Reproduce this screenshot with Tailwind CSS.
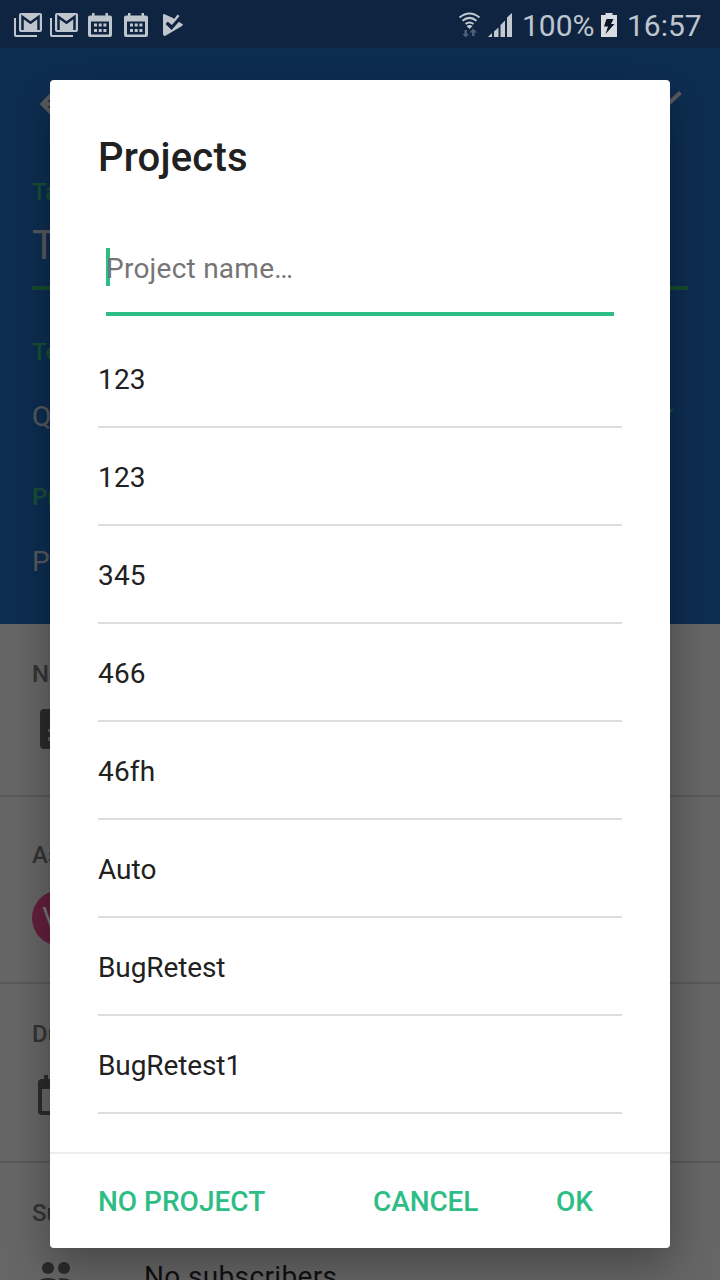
<!DOCTYPE html>
<html lang="en">
<head>
<meta charset="utf-8">
<title>Projects</title>
<script src="https://cdn.jsdelivr.net/npm/@tailwindcss/browser@4"></script>
</head>
<body class="font-[Roboto,sans-serif]">
<div class="relative flex h-[1280px] w-[720px] flex-col overflow-hidden bg-[#666]">
  <!-- status bar -->
  <div class="flex h-12 shrink-0 items-center bg-[#0f2440] text-[30px] leading-[48px] text-[#bfc5cf]">
    <svg class="h-12 w-[200px] shrink-0" viewBox="0 0 200 48" fill="#bfc5cd">
      <g id="mail"><path d="M14 18h2v17h21v2H16q-2 0-2-2z"/><rect x="19" y="13" width="23" height="19" rx="2"/><path d="M22.500 30V17L30.500 22.700 38.500 17V30" fill="none" stroke="#0f2440" stroke-width="2.500"/></g>
      <use href="#mail" x="36"/>
      <g id="cal"><path fill-rule="evenodd" d="M92 13h2.500v2.500h11V13h2.500v2.500h2q2 0 2 2V35q0 2-2 2H90q-2 0-2-2V17.500q0-2 2-2h2zM91 21.500V34.500h18V21.500z"/><path d="M94 23.500h3v3h-3zm4.700 0h3v3h-3zm4.700 0h3v3h-3zM94 29h3v3h-3zm4.700 0h3v3h-3zm4.700 0h3v3h-3z"/></g>
      <use href="#cal" x="36"/>
      <path d="M164 14 173 18 183 24.500 182 26 165 36Q163 36 163 34V15Q163 14 164 14z"/>
      <path d="M167 22.500 171.500 27 181 16.500" fill="none" stroke="#0f2440" stroke-width="4"/>
      <path d="M169.500 19.500 172 22 177.500 14.500 179.500 16 172 25 167.500 21.500z"/>
    </svg>
    <svg class="ml-[252px] h-12 w-[70px] shrink-0" viewBox="452 0 70 48">
      <g fill="none" stroke="#c3c9d1" stroke-width="2"><path d="M459.500 17.500Q469.500 9.500 479.500 17.500"/><path d="M462.500 20.700Q469.500 15 476.500 20.700"/><path d="M465.500 24Q469.500 21 473.500 24"/></g>
      <path fill="#c3c9d1" d="M466.500 26q3-2 6 0l-3 3z"/>
      <path fill="#4e5f76" d="M464.500 30h2.500v4h2l-3.300 3.500L462.500 34h2zM472 37v-4.500h-2.500L473.200 28.500 477 32.500h-2.500V36h-2.500z"/>
      <path fill="#c3c9d1" d="M488 37l4-4v4zm6-5.500 4.500-4V37H494zm6.500-6.500 4.500-4.500V37h-4.500zm6.500-7.500 5-4.500v24h-5z"/>
    </svg>
    <span class="w-[77px] shrink-0 pt-[3px]">100%</span>
    <svg class="h-12 w-[28px] shrink-0" viewBox="599 0 28 48"><path fill="#d9dce1" d="M605.500 13h7v2h4.500v22h-16V15h4.500z"/><path fill="#0c1526" d="M606.500 19h7l-2.500 5h3.500l-9 10 2.500-7.500h-4z"/></svg>
    <span class="pt-[3px]">16:57</span>
  </div>
  <!-- task header -->
  <div class="flex h-[576px] shrink-0 flex-col bg-[#0d2d51] px-8 text-[#575a5d]">
    <div class="flex h-[112px] items-center justify-between pr-1.5 pl-2">
      <svg class="h-8 w-8" viewBox="0 0 32 32" fill="none" stroke="#5c5c5c" stroke-width="4"><path d="M16 2 2.500 16 16 30M3 16h29"/></svg>
      <svg class="h-8 w-10" viewBox="0 0 40 32" fill="none" stroke="#5c5c5c" stroke-width="4"><path d="M3 18l10 10L38.500 4.500"/></svg>
    </div>
    <div class="mt-4 h-8 text-2xl font-medium text-[#175036]">Task</div>
    <div class="flex h-[82px] items-center border-b-4 border-[#144c30] pb-[3px] text-[40px]">Title</div>
    <div class="mt-[46px] h-8 text-2xl font-medium text-[#175036]">Team</div>
    <div class="mt-4 flex h-16 items-center justify-between pt-0.5 pr-3.5 text-[28px]">QA<svg class="-mt-2 h-2 w-4" viewBox="0 0 16 8" fill="#175036"><path d="M0 0h16L8 8z"/></svg></div>
    <div class="mt-[33px] h-8 text-2xl font-medium text-[#175036]">Project</div>
    <div class="mt-4 flex h-16 items-center pt-0.5 text-[28px]">Project</div>
  </div>
  <!-- task details -->
  <div class="h-[173px] shrink-0 border-b-2 border-[#595959] px-8 pt-[34px] text-[#333]">
    <div class="h-8 text-2xl font-medium">Notes</div>
    <svg class="mt-[19px] ml-2 h-10 w-8" viewBox="0 0 32 40"><rect width="32" height="40" rx="4" fill="#2b2b2b"/><path fill="#5c5c5c" d="M8 20h16v3H8zm0 8h16v4H8z"/></svg>
  </div>
  <div class="h-[187px] shrink-0 border-b-2 border-[#595959] px-8 pt-[42px] text-[#333]">
    <div class="h-8 text-2xl font-medium">Assignee</div>
    <div class="mt-[19px] flex size-14 items-center justify-center rounded-full bg-[#631f3c] text-[28px] text-[#777]"><span>VV</span></div>
  </div>
  <div class="h-[179px] shrink-0 border-b-2 border-[#595959] px-8 pt-[34px] text-[#333]">
    <div class="h-8 text-2xl font-medium">Due</div>
    <svg class="mt-[25px] ml-1.5 h-10 w-9" viewBox="0 0 36 40"><path fill="#2b2b2b" fill-rule="evenodd" d="M6 0h4v4h16V0h4v4h2q4 0 4 4v28q0 4-4 4H4q-4 0-4-4V8q0-4 4-4h2zM4 14v22h28V14z"/></svg>
  </div>
  <div class="h-[117px] shrink-0 px-8 pt-[34px] text-[#333]">
    <div class="h-8 text-2xl font-medium">Subscribers</div>
    <div class="mt-[23px] flex h-12 items-center gap-[68px] pl-1 text-[28px] text-[#101010]">
      <svg class="h-12 w-10 shrink-0" viewBox="36 1252 40 48" fill="#2b2b2b"><circle cx="48" cy="1268" r="6"/><circle cx="64" cy="1268" r="6"/><path d="M36 1288q0-10 12-10t12 10zM58 1278.500q16-2 16 9.500H62q0-7-4-9.500z"/></svg>
      <span class="pt-0.5 tracking-[0.35px]">No subscribers</span>
    </div>
  </div>

  <!-- project dialog -->
  <div class="absolute top-20 left-[50px] flex h-[1168px] w-[620px] flex-col rounded bg-white text-[28px] text-[#212121] shadow-[0_16px_44px_rgba(0,0,0,0.32)]">
    <div class="mt-[53px] pl-12 text-[40px] leading-[50px] font-medium tracking-[0.2px]">Projects</div>
    <div class="mx-14 mt-[65px] h-[68px] border-b-4 border-[#2dbd85] text-[#757575]">
      <div class="h-[38px] border-l-4 border-[#2dbd85] leading-[42px]"><span class="-ml-1 tracking-[0.25px]">Project name…</span></div>
    </div>
    <div class="mx-12 mt-[14px] flex-1 leading-[100px]">
      <div class="h-[98px] border-b-2 border-[#dedede] tracking-[0.2px]">123</div>
      <div class="h-[98px] border-b-2 border-[#dedede] tracking-[0.2px]">123</div>
      <div class="h-[98px] border-b-2 border-[#dedede] tracking-[0.2px]">345</div>
      <div class="h-[98px] border-b-2 border-[#dedede] tracking-[0.2px]">466</div>
      <div class="h-[98px] border-b-2 border-[#dedede] tracking-[0.2px]">46fh</div>
      <div class="h-[98px] border-b-2 border-[#dedede]">Auto</div>
      <div class="h-[98px] border-b-2 border-[#dedede] tracking-[-0.1px]">BugRetest</div>
      <div class="h-[98px] border-b-2 border-[#dedede] tracking-[-0.1px]">BugRetest1</div>
    </div>
    <div class="flex h-24 items-center border-t-2 border-[#ededed] pt-0.5 pl-12 font-medium text-[#2dbd85]">
      <span class="w-[275px]">NO PROJECT</span><span class="w-[183px] tracking-[-0.1px]">CANCEL</span><span>OK</span>
    </div>
  </div>
</div>
</body>
</html>
